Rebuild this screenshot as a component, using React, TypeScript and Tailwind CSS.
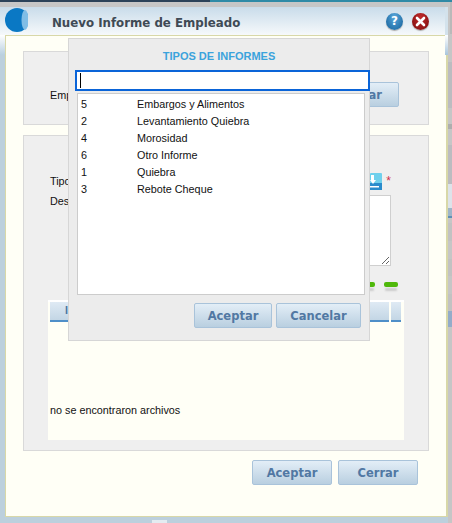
import React from 'react';

const rows = [
  ['5', 'Embargos y Alimentos'],
  ['2', 'Levantamiento Quiebra'],
  ['4', 'Morosidad'],
  ['6', 'Otro Informe'],
  ['1', 'Quiebra'],
  ['3', 'Rebote Cheque'],
];

function Btn({ label, className }: { label: string; className: string }) {
  return (
    <button className={`h-[25px] rounded-[2px] border border-[#a9c3da] bg-gradient-to-b from-[#e3eef7] to-[#b9cfe0] pt-[2px] font-['DejaVu_Sans'] text-[11.5px] font-bold text-[#5178a3] ${className}`}>
      {label}
    </button>
  );
}

export default function App() {
  return (
    <div className="relative h-[523px] w-[452px] overflow-hidden bg-[#bcd0dd] font-['Liberation_Sans',sans-serif] text-[10.8px] text-[#111]">
      {/* top strip */}
      <div className="flex h-[2px]">
        <div className="w-[210px] bg-[#2b4259]" />
        <div className="flex-1 bg-[#2f8aa6]" />
      </div>
      <div className="h-[5px] bg-[#c6c6c6]" />

      {/* window header */}
      <div className="flex h-[28px] w-[445px] items-center bg-gradient-to-b from-[#c9dcea] to-[#f6f9fb]">
        <svg width="23" height="26" viewBox="0 0 23 26" className="ml-[5px] mt-[-2px] shrink-0">
          <circle cx="12" cy="13" r="12" fill="#0a78c4" />
          <ellipse cx="20" cy="13" rx="3.500" ry="10" fill="#7fbde6" />
        </svg>
        <span className="ml-[24px] mt-[6px] font-['DejaVu_Sans'] text-[11.8px] font-bold text-[#3f4a55]">Nuevo Informe de Empleado</span>
        <div className="ml-auto mr-[16px] flex items-center gap-[9px]">
          <span className="flex h-[17px] w-[17px] items-center justify-center rounded-full bg-radial-[at_50%_25%] from-[#5aa8dc] to-[#125f98] font-['DejaVu_Sans'] text-[12px] font-bold leading-none text-white shadow-[0_1px_1px_#aaa]">?</span>
          <span className="flex h-[17px] w-[17px] items-center justify-center rounded-full bg-radial-[at_50%_25%] from-[#c02a2a] to-[#7d0d0d] shadow-[0_1px_1px_#aaa]">
            <svg width="11" height="11" viewBox="0 0 11 11">
              <path d="M2 2l7 7M9 2l-7 7" stroke="#fff" strokeWidth="2.600" strokeLinecap="round" />
            </svg>
          </span>
        </div>
      </div>

      {/* window body */}
      <div className="ml-[5px] h-[482px] w-[443px] border-t border-r-2 border-b border-l border-[#d8d8a8] bg-[#fffff6] px-[17px] pt-[15px]">
        <div className="relative h-[74px] border border-[#d9d9d9] bg-[#efefef] pl-[26px] pt-[35px]">
          <span>Empleado</span>
          <Btn label="Buscar" className="absolute left-[291px] top-[30px] w-[84px] pl-[6px]" />
        </div>

        <div className="mt-[10px] h-[316px] border border-[#d9d9d9] bg-[#efefef] pt-[37px]">
          <div className="flex items-center pl-[26px]">
            <span className="flex-1">Tipo</span>
            <div className="mr-[37px] flex items-start gap-[4px]">
              <svg width="12" height="17" viewBox="0 0 12 17">
                <rect width="12" height="17" rx="1" fill="#6fd0ec" />
                <path d="M0 10h12v7H0z" fill="#2a8ccc" />
                <path d="M0 13h9v1.500H0z" fill="#fff" />
                <path d="M1 2h3v5h2l-3 4-3-4h1z" fill="#fff" />
              </svg>
              <span className="text-[12px] leading-[16px] text-[#d0304a]">*</span>
            </div>
          </div>
          <div className="flex pl-[26px] pt-[5px]">
            <span className="mt-[-2px] flex-1">Descripción</span>
            <textarea className="mr-[37px] block h-[71px] w-[150px] resize border border-[#cfcfcf] bg-white" />
          </div>
          <div className="mr-[30px] mt-[16px] flex justify-end gap-[9px]">
            <div className="h-[5px] w-[8px] rounded-[2px] bg-[#4fb80a] shadow-[0_5px_2px_-1px_#ccc]" />
            <div className="h-[5px] w-[14px] rounded-[2px] bg-[#4fb80a] shadow-[0_5px_2px_-1px_#ccc]" />
          </div>
          <div className="ml-[24px] mt-[13px] h-[140px] w-[356px] border-t-2 border-white bg-[#fffff6]">
            <div className="mx-[2px] flex h-[20px] w-[351px] gap-[2px]">
              <div className="flex-1 border-b-2 border-[#4f8fc8] bg-gradient-to-b from-[#dfeaf4] to-[#c3d6e5] pl-[15px] font-bold text-[#4d76a3]">ID</div>
              <div className="w-[10px] border-b-2 border-[#4f8fc8] bg-gradient-to-b from-[#dfeaf4] to-[#c3d6e5]" />
            </div>
            <p className="mt-[80px] pl-[2px]">no se encontraron archivos</p>
          </div>
        </div>

        <div className="mt-[9px] flex justify-end gap-[6px] pr-[11px]">
          <Btn label="Aceptar" className="w-[80px]" />
          <Btn label="Cerrar" className="w-[80px]" />
        </div>
      </div>

      {/* edge fragments of the page behind */}
      <div className="absolute left-0 top-[35px] h-[20px] w-[5px] bg-gradient-to-b from-white to-[#b9d0e0]" />
      <div className="absolute right-[3px] top-[7px] h-[28px] w-[4px] bg-[#d3e2ec]" />
      <div className="absolute right-[3px] top-[35px] h-[20px] w-[4px] bg-gradient-to-b from-white to-[#a9c6dc]" />
      <div className="absolute right-0 top-[2px] flex h-[521px] w-[4px] flex-col bg-[#c6c6c6]">
        <div className="h-[32px] w-[2px] self-end bg-[#b9b9b9]" />
        <div className="mt-[28px] h-[46px] bg-[#bcbcc0]" />
        <div className="mt-[16px] h-[5px] bg-[#aeaeae]" />
        <div className="mt-[16px] h-[39px] bg-[#bcbcc0]" />
        <div className="h-[24px] bg-[#dde3ea]" />
        <div className="h-[8px] bg-[#9fb5c8]" />
        <div className="h-[2px] bg-[#5f8fb5]" />
        <div className="mt-[5px] h-[18px] bg-[#c2c2c2]" />
        <div className="mt-[18px] h-[17px] bg-[#c2c2c2]" />
        <div className="mt-[18px] h-[17px] bg-[#c2c2c2]" />
        <div className="h-[16px] bg-[#94acc9]" />
      </div>
      <div className="absolute bottom-0 left-[152px] h-[3px] w-[15px] bg-[#e4ecf1]" />

      {/* selector popup */}
      <div className="absolute left-[68px] top-[38px] h-[303px] w-[302px] border border-[#d6d6d6] bg-[#ececec]">
        <div className="pt-[10px] text-center text-[11px] font-bold leading-[14px] text-[#3ba3dc]">TIPOS DE INFORMES</div>
        <div className="ml-[6px] mt-[7px] flex h-[21px] w-[295px] items-center border-2 border-[#0a64d8] bg-white pl-[3px]">
          <div className="h-[15px] w-px bg-black" />
        </div>
        <div className="ml-[8px] mt-[2px] h-[202px] w-[288px] border border-[#cccccc] bg-white pl-[3px] pt-[2px]">
          {rows.map(([id, name]) => (
            <div key={id} className="flex h-[17px] items-center">
              <span className="w-[56px]">{id}</span>
              <span>{name}</span>
            </div>
          ))}
        </div>
        <div className="mr-[8px] mt-[8px] flex justify-end gap-[4px]">
          <Btn label="Aceptar" className="w-[78px]" />
          <Btn label="Cancelar" className="w-[85px]" />
        </div>
      </div>
    </div>
  );
}
